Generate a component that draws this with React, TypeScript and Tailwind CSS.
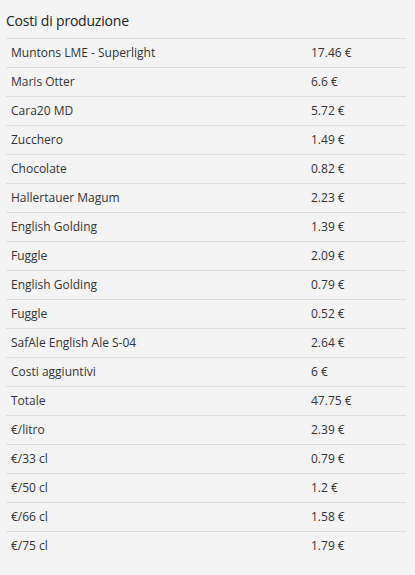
import React from "react";

const rows: [string, string][] = [
  ["Muntons LME - Superlight", "17.46 €"],
  ["Maris Otter", "6.6 €"],
  ["Cara20 MD", "5.72 €"],
  ["Zucchero", "1.49 €"],
  ["Chocolate", "0.82 €"],
  ["Hallertauer Magum", "2.23 €"],
  ["English Golding", "1.39 €"],
  ["Fuggle", "2.09 €"],
  ["English Golding", "0.79 €"],
  ["Fuggle", "0.52 €"],
  ["SafAle English Ale S-04", "2.64 €"],
  ["Costi aggiuntivi", "6 €"],
  ["Totale", "47.75 €"],
  ["€/litro", "2.39 €"],
  ["€/33 cl", "0.79 €"],
  ["€/50 cl", "1.2 €"],
  ["€/66 cl", "1.58 €"],
  ["€/75 cl", "1.79 €"],
];

export default function App() {
  return (
    <div
      className="w-[415px] h-[575px] bg-[#f4f4f4] text-[#333333] px-[6px]"
      style={{ fontFamily: '"Open Sans", "Noto Sans", sans-serif' }}
    >
      <div className="h-[38px] flex items-center pt-[2px] text-[14px] text-[#222222] font-medium tracking-[-0.2px]">
        Costi di produzione
      </div>
      <div className="w-[400px]">
        {rows.map(([name, val], i) => (
          <div key={i} className="grid grid-cols-[300px_100px] h-[29px] border-t border-[#dddddd] text-[12px]">
            <div className="pl-[5px] flex items-center">{name}</div>
            <div className="pl-[5px] flex items-center">{val}</div>
          </div>
        ))}
      </div>
    </div>
  );
}
